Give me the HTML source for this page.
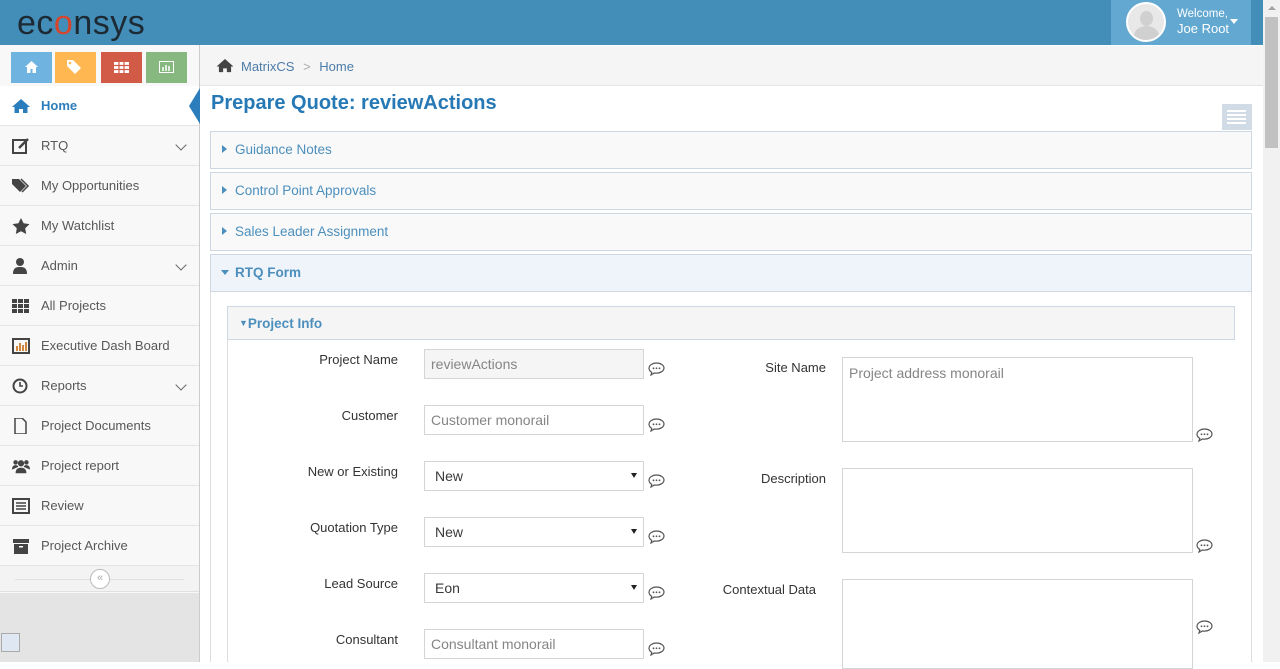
<!DOCTYPE html>
<html><head><meta charset="utf-8"><style>
*{box-sizing:border-box;margin:0;padding:0}
body{width:1280px;height:662px;overflow:hidden;font-family:"Liberation Sans",sans-serif;font-size:13px;color:#393939;background:#fff;position:relative}
.abs{position:absolute}
#hdr{left:0;top:0;width:1263px;height:45px;background:#438eb9}
#logo{left:17px;top:4px;font-size:34px;color:#1d2a33;letter-spacing:0.5px;font-weight:normal}
#user{left:1111px;top:0;width:140px;height:45px;background:#62a8d1}
#sb{left:0;top:45px;width:200px;height:617px;background:#f8f8f8;border-right:1px solid #ccc}
.sc{position:absolute;top:7px;width:41px;height:31px}
.mi{position:absolute;left:0;width:199px;height:40px;border-bottom:1px solid #e5e5e5;background:#f8f8f8;font-size:13px;color:#585858;line-height:39px;padding-left:41px}
.mi .ic{position:absolute;left:12px;top:12px;width:18px;height:16px}
.chev{position:absolute;right:14px;top:15px;width:8px;height:8px;border-right:1.5px solid #666;border-bottom:1.5px solid #666;transform:rotate(45deg)}
#bc{left:200px;top:46px;width:1063px;height:40px;background:#f5f5f5;border-bottom:1px solid #e5e5e5}
h1{position:absolute;left:211px;top:92px;font-size:20px;color:#2679b5;font-weight:bold}
.acc{position:absolute;left:210px;width:1042px;height:38px;border:1px solid #cdd8e3;background:#f9f9f9;color:#4c8fbd;font-size:13.5px;line-height:36px;padding-left:24px}
.acc:before{content:"";position:absolute;left:11px;top:13px;border-left:5px solid #4c8fbd;border-top:4px solid transparent;border-bottom:4px solid transparent}
.acc.open:before{left:10px;top:15px;border-top:5px solid #4c8fbd;border-left:4px solid transparent;border-right:4px solid transparent;border-bottom:0}
.lbl{position:absolute;text-align:right;font-size:13px;color:#333}
.inp{position:absolute;left:424px;width:220px;height:30px;border:1px solid #d5d5d5;font-size:14px;color:#858585;padding:6px 6px;background:#fff}
.sel{color:#393939;padding-left:10px}
.sel:after{content:"";position:absolute;right:6px;top:11px;border-top:5px solid #222;border-left:3px solid transparent;border-right:3px solid transparent}
.ta{position:absolute;left:842px;width:351px;height:85px;border:1px solid #d5d5d5;font-size:14px;color:#858585;padding:7px 6px;background:#fff}
.cm{position:absolute;width:17px;height:14px}
</style></head><body>
<div id="hdr" class="abs"></div>
<div id="logo" class="abs">ec<span style="color:#d4462c">o</span>nsys</div>
<div id="user" class="abs">
 <div class="abs" style="left:15px;top:2px;width:40px;height:40px;border-radius:50%;background:#e8e8e8;border:2px solid #fff;overflow:hidden">
  <div class="abs" style="left:12px;top:7px;width:13px;height:15px;border-radius:50%;background:#d0d0d0"></div>
  <div class="abs" style="left:6px;top:22px;width:25px;height:20px;border-radius:50% 50% 0 0;background:#d0d0d0"></div></div>
 <div class="abs" style="left:66px;top:8px;color:#fff;font-size:11.5px;line-height:13px">Welcome,<br><span style="font-size:13px;line-height:16px">Joe Root</span></div>
 <div class="abs" style="left:119px;top:19px;border-top:5px solid #fff;border-left:4px solid transparent;border-right:4px solid transparent"></div>
</div>
<div class="abs" style="left:1263px;top:0;width:17px;height:662px;background:#f1f1f1"><div class="abs" style="left:2px;top:17px;width:13px;height:131px;background:#c1c1c1"></div><div class="abs" style="left:5px;top:6px;border-bottom:4px solid #a3a3a3;border-left:4px solid transparent;border-right:4px solid transparent"></div></div>

<div id="sb" class="abs">
 <div class="sc" style="left:11px;background:#6fb3e0"><svg class="abs" style="left:14px;top:9px" width="13" height="12" viewBox="0 0 13 12"><path d="M6.5 0L0 6h2v6h3.5V8h2v4H11V6h2z" fill="#fff"/></svg></div>
 <div class="sc" style="left:55px;background:#ffb752"><svg class="abs" style="left:12px;top:8px" width="17" height="14" viewBox="0 0 17 14"><path d="M0 0h6l8 8-6 6-8-8z" fill="#fff"/><circle cx="3" cy="3" r="1.3" fill="#ffb752"/></svg></div>
 <div class="sc" style="left:101px;background:#d15b47"><svg class="abs" style="left:13px;top:10px" width="15" height="11"><rect width="15" height="11" fill="#fff"/><path d="M0 3.5h15M0 7.5h15M5 0v11M10 0v11" stroke="#d15b47" stroke-width="1.2"/></svg></div>
 <div class="sc" style="left:146px;background:#87b87f"><svg class="abs" style="left:13px;top:9px" width="15" height="12"><rect x=".5" y=".5" width="14" height="11" fill="none" stroke="#fff"/><path d="M4 10V6M7 10V4M10 10V5" stroke="#fff" stroke-width="1.5"/></svg></div>
 <div class="abs" style="left:0;top:41px;width:199px;height:1px;background:#e5e5e5"></div>
</div>
<div class="mi" style="top:86px;background:#fff;color:#2b7dbc;font-weight:bold"><svg class="ic" viewBox="0 0 18 16"><path d="M9 1L0 9h2.5v6h4.5v-4h4v4h4.5V9H18z" fill="#2b7dbc"/></svg>Home</div>
<div class="abs" style="left:189px;top:88px;border-right:11px solid #2b7dbc;border-top:18px solid transparent;border-bottom:18px solid transparent"></div>
<div class="mi" style="top:126px"><svg class="ic" viewBox="0 0 18 16"><rect x="1" y="2" width="13" height="13" fill="none" stroke="#444" stroke-width="2"/><path d="M7 10l9-9" stroke="#444" stroke-width="2.5"/></svg>RTQ<span class="chev"></span></div>
<div class="mi" style="top:166px"><svg class="ic" viewBox="0 0 18 16"><path d="M0 1h7l7 7-6 6-8-8z" fill="#444"/><path d="M9 1l7 7-6 6" fill="none" stroke="#444" stroke-width="1.5"/></svg>My Opportunities</div>
<div class="mi" style="top:206px"><svg class="ic" viewBox="0 0 18 16"><path d="M9 0l2.6 5.3 5.9.8-4.3 4.1 1 5.8L9 13.3 3.8 16l1-5.8L.5 6.1l5.9-.8z" fill="#444"/></svg>My Watchlist</div>
<div class="mi" style="top:246px"><svg class="ic" viewBox="0 0 18 16"><circle cx="8" cy="4" r="4" fill="#444"/><path d="M1 16c0-6 3-7 7-7s7 1 7 7z" fill="#444"/></svg>Admin<span class="chev"></span></div>
<div class="mi" style="top:286px"><svg class="ic" viewBox="0 0 18 16"><g fill="#444"><rect x="0" y="1" width="5" height="4"/><rect x="6" y="1" width="5" height="4"/><rect x="12" y="1" width="5" height="4"/><rect x="0" y="6" width="5" height="4"/><rect x="6" y="6" width="5" height="4"/><rect x="12" y="6" width="5" height="4"/><rect x="0" y="11" width="5" height="4"/><rect x="6" y="11" width="5" height="4"/><rect x="12" y="11" width="5" height="4"/></g></svg>All Projects</div>
<div class="mi" style="top:326px"><svg class="ic" viewBox="0 0 18 16"><rect x="1" y="1" width="16" height="14" fill="none" stroke="#444" stroke-width="2"/><path d="M5 13V8M8 13V5M11 13V7M14 13V4" stroke="#d0873c" stroke-width="2"/></svg>Executive Dash Board</div>
<div class="mi" style="top:366px"><svg class="ic" viewBox="0 0 18 16"><circle cx="8" cy="8" r="6.5" fill="none" stroke="#444" stroke-width="2"/><path d="M8 4v4h3" fill="none" stroke="#444" stroke-width="1.6"/></svg>Reports<span class="chev"></span></div>
<div class="mi" style="top:406px"><svg class="ic" viewBox="0 0 18 16"><path d="M3 0h7l4 4v12H3z" fill="none" stroke="#444" stroke-width="1.5"/></svg>Project Documents</div>
<div class="mi" style="top:446px"><svg class="ic" viewBox="0 0 20 16"><circle cx="4" cy="4" r="2.5" fill="#444"/><circle cx="16" cy="4" r="2.5" fill="#444"/><circle cx="10" cy="5" r="3.5" fill="#444"/><path d="M0 12c0-4 2-5 4-5s3 1 3 2M20 12c0-4-2-5-4-5s-3 1-3 2M4 16c0-5 3-6 6-6s6 1 6 6z" fill="#444"/></svg>Project report</div>
<div class="mi" style="top:486px"><svg class="ic" viewBox="0 0 18 16"><rect x="1" y="1" width="16" height="14" fill="none" stroke="#444" stroke-width="2"/><path d="M4 5h10M4 8h10M4 11h10" stroke="#444" stroke-width="1.5"/></svg>Review</div>
<div class="mi" style="top:526px"><svg class="ic" viewBox="0 0 18 16"><rect x="1" y="1" width="16" height="4" fill="#444"/><rect x="2" y="6" width="14" height="10" fill="#444"/><rect x="7" y="8" width="4" height="1.5" fill="#fff"/></svg>Project Archive</div>
<div class="abs" style="left:0;top:566px;width:199px;height:26px;background:#f3f3f3;border-bottom:1px solid #e0e0e0"><div class="abs" style="left:15px;top:13px;width:169px;height:1px;background:#e0e0e0"></div><div class="abs" style="left:90px;top:3px;width:20px;height:20px;border-radius:50%;border:1px solid #bbb;background:#fff;font-size:11px;color:#aaa;text-align:center;line-height:17px">«</div></div>
<div class="abs" style="left:0;top:593px;width:199px;height:69px;background:#e4e4e4"></div>
<div class="abs" style="left:1px;top:633px;width:19px;height:19px;border:1px solid #aaa;background:#dfe8f2"></div>

<div id="bc" class="abs"></div>
<svg class="abs" style="left:216px;top:58px" width="18" height="15" viewBox="0 0 18 16"><path d="M9 1L0 9h2.5v6h4.5v-4h4v4h4.5V9H18z" fill="#444"/></svg>
<div class="abs" style="left:241px;top:59px;color:#4c7ca8;font-size:13px">MatrixCS <span style="color:#aaa;margin:0 5px">&gt;</span> Home</div>
<h1>Prepare Quote: reviewActions</h1>
<div class="abs" style="left:1222px;top:104px;width:30px;height:26px;background:#d1dbe5"><div class="abs" style="left:5px;top:6px;width:19px;height:15px;background:repeating-linear-gradient(#fff 0 2px,transparent 2px 4px)"></div></div>
<div class="acc" style="top:131px">Guidance Notes</div>
<div class="acc" style="top:172px">Control Point Approvals</div>
<div class="acc" style="top:213px">Sales Leader Assignment</div>
<div class="acc open" style="top:254px;background:#eef4f9;font-weight:bold">RTQ Form</div>
<div class="abs" style="left:210px;top:292px;width:1042px;height:370px;border-left:1px solid #ddd;border-right:1px solid #ddd"></div>
<div class="abs" style="left:227px;top:306px;width:1008px;height:34px;border:1px solid #cdd8e3;background:#f5f5f5;color:#4c8fbd;font-weight:bold;font-size:13.5px;line-height:32px;padding-left:11px"><span style="font-size:9px;vertical-align:2px">▼</span>Project Info</div>
<div class="abs" style="left:227px;top:340px;width:1px;height:322px;background:#ddd"></div>

<div class="lbl" style="left:250px;width:148px;top:352px">Project Name</div>
<div class="inp" style="top:349px;background:#f5f5f5">reviewActions</div>
<div class="lbl" style="left:250px;width:148px;top:408px">Customer</div>
<div class="inp" style="top:405px">Customer monorail</div>
<div class="lbl" style="left:250px;width:148px;top:464px">New or Existing</div>
<div class="inp sel" style="top:461px">New</div>
<div class="lbl" style="left:250px;width:148px;top:520px">Quotation Type</div>
<div class="inp sel" style="top:517px">New</div>
<div class="lbl" style="left:250px;width:148px;top:576px">Lead Source</div>
<div class="inp sel" style="top:573px">Eon</div>
<div class="lbl" style="left:250px;width:148px;top:632px">Consultant</div>
<div class="inp" style="top:629px">Consultant monorail</div>

<div class="lbl" style="left:680px;width:146px;top:360px">Site Name</div>
<div class="ta" style="top:357px">Project address monorail</div>
<div class="lbl" style="left:680px;width:146px;top:471px">Description</div>
<div class="ta" style="top:468px"></div>
<div class="lbl" style="left:680px;width:136px;top:582px">Contextual Data</div>
<div class="ta" style="top:579px;height:90px"></div>

<svg width="0" height="0" style="position:absolute"><defs><g id="c"><path d="M8.5 1C4.4 1 1 3.4 1 6.3c0 1.7 1.1 3.1 2.8 4.1L3 13l3.3-2c.7.2 1.4.2 2.2.2 4.1 0 7.5-2.4 7.5-5.2S12.6 1 8.5 1z" fill="#fff" stroke="#555" stroke-width="1.2"/><circle cx="5.5" cy="6.3" r=".9" fill="#555"/><circle cx="8.5" cy="6.3" r=".9" fill="#555"/><circle cx="11.5" cy="6.3" r=".9" fill="#555"/></g></defs></svg>
<svg class="cm" style="left:648px;top:362px"><use href="#c"/></svg>
<svg class="cm" style="left:648px;top:418px"><use href="#c"/></svg>
<svg class="cm" style="left:648px;top:474px"><use href="#c"/></svg>
<svg class="cm" style="left:648px;top:530px"><use href="#c"/></svg>
<svg class="cm" style="left:648px;top:586px"><use href="#c"/></svg>
<svg class="cm" style="left:648px;top:642px"><use href="#c"/></svg>
<svg class="cm" style="left:1196px;top:428px"><use href="#c"/></svg>
<svg class="cm" style="left:1196px;top:539px"><use href="#c"/></svg>
<svg class="cm" style="left:1196px;top:620px"><use href="#c"/></svg>
</body></html>
